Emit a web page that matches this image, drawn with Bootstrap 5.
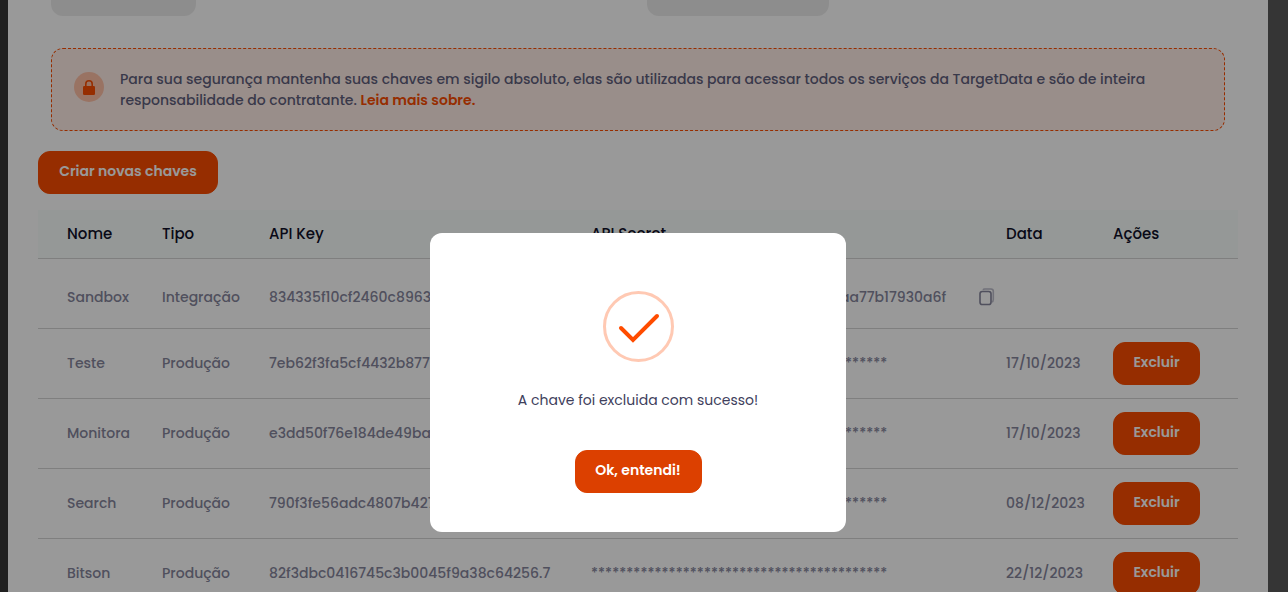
<!DOCTYPE html>
<html lang="pt-BR">
<head>
<meta charset="utf-8">
<meta name="viewport" content="width=device-width, initial-scale=1">
<title>Chaves de API - TargetData</title>
<link href="https://cdn.jsdelivr.net/npm/bootstrap@5.3.0/dist/css/bootstrap.min.css" rel="stylesheet">
<style>
  body {
    font-family: Poppins, Inter, sans-serif;
    font-size: 14px;
    line-height: 21px;
    color: #5b5b78;
    background: linear-gradient(90deg, #363636 50%, #595959 50%);
    min-height: 100vh;
  }
  .sheet { margin-right: 20px; margin-left: 8px; padding: 0 30px; background: #fff; min-height: 100vh; }
  .pill-grid { display: grid; grid-template-columns: 1fr 1fr; column-gap: 18px; padding: 0 13px; }
  .pill { height: 16px; border-radius: 0 0 12px 12px; background: #ececec; }
  .pill-a { width: 145px; }
  .pill-b { width: 182px; }
  .notice {
    margin: 32px 13px 20px;
    padding: 20px 22px 19px;
    border: 1px dashed #fb4c00;
    border-radius: 12px;
    background: #ffede6;
    color: #5f5f7c;
    font-weight: 500;
  }
  .notice p { max-width: 1050px; }
  .notice a { color: #fb4c00; font-weight: 600; text-decoration: none; }
  .lock-disc { width: 30px; height: 30px; border-radius: 50%; background: #ffc0a6; margin-top: 3px; }
  .btn-brand {
    --bs-btn-color: #fff;
    --bs-btn-bg: #fb4c00;
    --bs-btn-border-color: #fb4c00;
    --bs-btn-hover-color: #fff;
    --bs-btn-hover-bg: #dc4000;
    --bs-btn-hover-border-color: #dc4000;
    --bs-btn-font-size: 14px;
    --bs-btn-font-weight: 600;
    --bs-btn-line-height: 21px;
    --bs-btn-border-radius: 12px;
    padding: 9px 0 11px;
    height: 43px;
    white-space: nowrap;
  }
  .btn-create { width: 180px; }
  .btn-remove { width: 87px; }
  .btn-ok { --bs-btn-bg: #dc4000; --bs-btn-border-color: #dc4000; width: 127px; }
  .keys { table-layout: fixed; min-width: 1120px; margin-top: 16px; color: inherit; --bs-table-bg: transparent; }
  .keys th, .keys td { padding: 13px 0; border-bottom: 1px solid #d4d4d4; white-space: nowrap; vertical-align: middle; color: #85859c; font-weight: 500; }
  .keys th { padding: 13px 0 14px; background: #f9fdfc; color: #101028; font-size: 15px; }
  .keys tr > :first-child { padding-left: 29px; }
  .keys td { height: 70px; }
  .keys .roomy td { padding-top: 20px; }
  .c-name { width: 124px; } .c-type { width: 107px; } .c-key { width: 322px; }
  .c-copy { width: 27px; } .c-date { width: 107px; } .c-act { width: 125px; }
  .veil { background: rgba(0, 0, 0, .4); padding-right: 12px; }
  .veil .modal-dialog { --bs-modal-width: 416px; margin-top: 233px; }
  .veil .modal-content { border: 0; border-radius: 12px; padding: 58px 30px 39px; background: #fff; color: #40405c; }
  .veil p { margin: 28px 0 39px; }
</style>
</head>
<body class="modal-open overflow-hidden">
<main class="sheet">
  <div class="pill-grid"><div class="pill pill-a"></div><div class="pill pill-b"></div></div>

  <section class="notice d-flex gap-3">
    <span class="lock-disc d-flex align-items-center justify-content-center flex-shrink-0">
      <svg width="12" height="15" viewBox="0 0 12 15" aria-hidden="true"><path d="M2.800 7V4a3.200 3.200 0 0 1 6.400 0v3" fill="none" stroke="#fb4c00" stroke-width="1.600"/><rect y="6" width="12" height="9" rx="1.300" fill="#fb4c00"/></svg>
    </span>
    <p class="mb-0">Para sua segurança mantenha suas chaves em sigilo absoluto, elas são utilizadas para acessar todos os serviços da TargetData e são de inteira responsabilidade do contratante. <a href="#">Leia mais sobre.</a></p>
  </section>

  <button type="button" class="btn btn-brand btn-create d-block">Criar novas chaves</button>

  <table class="table keys mb-0">
    <colgroup><col class="c-name"><col class="c-type"><col class="c-key"><col><col class="c-copy"><col class="c-date"><col class="c-act"></colgroup>
    <thead><tr><th scope="col">Nome</th><th scope="col">Tipo</th><th scope="col">API Key</th><th scope="col">API Secret</th><th></th><th scope="col">Data</th><th scope="col">Ações</th></tr></thead>
    <tbody>
      <tr class="roomy"><td>Sandbox</td><td>Integração</td><td>834335f10cf2460c8963</td><td>5c0e9d24b8a1473f90e2c6d85b3f41aa77b17930a6f</td>
        <td><a href="#" aria-label="Copiar"><svg class="d-block" width="16" height="18" viewBox="0 0 16 18" fill="none" stroke="#85859c" stroke-width="1.600"><path d="M4 1.800Q4.500 1 5.700 1H12Q14.300 1 14.300 3.300V11.500Q14.300 13.500 12.800 14" stroke="#bcbcca"/><rect x="1" y="3.500" width="11" height="13" rx="2.300"/></svg></a></td><td></td><td></td></tr>
      <tr><td>Teste</td><td>Produção</td><td>7eb62f3fa5cf4432b877</td><td>******************************************</td><td></td><td>17/10/2023</td><td><button type="button" class="btn btn-brand btn-remove">Excluir</button></td></tr>
      <tr><td>Monitora</td><td>Produção</td><td>e3dd50f76e184de49ba</td><td>******************************************</td><td></td><td>17/10/2023</td><td><button type="button" class="btn btn-brand btn-remove">Excluir</button></td></tr>
      <tr><td>Search</td><td>Produção</td><td>790f3fe56adc4807b427</td><td>******************************************</td><td></td><td>08/12/2023</td><td><button type="button" class="btn btn-brand btn-remove">Excluir</button></td></tr>
      <tr><td>Bitson</td><td>Produção</td><td>82f3dbc0416745c3b0045f9a38c64256.7</td><td>******************************************</td><td></td><td>22/12/2023</td><td><button type="button" class="btn btn-brand btn-remove">Excluir</button></td></tr>
    </tbody>
  </table>
</main>

<div class="modal show d-block veil" tabindex="-1" role="dialog" aria-modal="true" aria-labelledby="done-text">
  <div class="modal-dialog">
    <div class="modal-content align-items-center text-center">
      <svg width="71" height="71" viewBox="0 0 71 71" fill="none" aria-hidden="true"><circle cx="35.500" cy="35.500" r="34" stroke="#ffc9b3" stroke-width="3"/><path d="M18 37 30 49 54 25" stroke="#ff4c00" stroke-width="4" stroke-linecap="round"/></svg>
      <p id="done-text">A chave foi excluida com sucesso!</p>
      <button type="button" class="btn btn-brand btn-ok">Ok, entendi!</button>
    </div>
  </div>
</div>
<script src="https://cdn.jsdelivr.net/npm/bootstrap@5.3.0/dist/js/bootstrap.bundle.min.js"></script>
</body>
</html>
